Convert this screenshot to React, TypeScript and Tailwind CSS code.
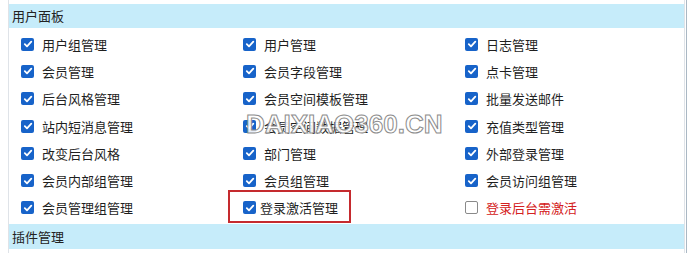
import React from "react";

type Item = { label: string; checked?: boolean; red?: boolean; tight?: boolean };

const rows: Item[][] = [
  [{ label: "用户组管理", checked: true }, { label: "用户管理", checked: true }, { label: "日志管理", checked: true }],
  [{ label: "会员管理", checked: true }, { label: "会员字段管理", checked: true }, { label: "点卡管理", checked: true }],
  [{ label: "后台风格管理", checked: true }, { label: "会员空间模板管理", checked: true }, { label: "批量发送邮件", checked: true }],
  [{ label: "站内短消息管理", checked: true }, { label: "会员空间数据管理", checked: true }, { label: "充值类型管理", checked: true }],
  [{ label: "改变后台风格", checked: true }, { label: "部门管理", checked: true }, { label: "外部登录管理", checked: true }],
  [{ label: "会员内部组管理", checked: true }, { label: "会员组管理", checked: true }, { label: "会员访问组管理", checked: true }],
  [{ label: "会员管理组管理", checked: true }, { label: "登录激活管理", checked: true, tight: true }, { label: "登录后台需激活", checked: false, red: true }],
];

function Box({ checked }: { checked?: boolean }) {
  if (checked) {
    return (
      <span className="flex h-[13px] w-[13px] shrink-0 items-center justify-center rounded-[2px] bg-[#1763c9]">
        <svg width="10" height="10" viewBox="0 0 10 10">
          <path d="M1.8 5.2 L4 7.3 L8.3 2.6" fill="none" stroke="#fff" strokeWidth="1.8" strokeLinecap="round" strokeLinejoin="round" />
        </svg>
      </span>
    );
  }
  return <span className="h-[13px] w-[13px] shrink-0 rounded-[2px] border-[1.5px] border-[#8a8a8a] bg-white" />;
}

export default function App() {
  return (
    <div
      className="relative h-[253px] w-[690px] overflow-hidden bg-white"
      style={{ fontFamily: '"Noto Sans CJK SC", "Noto Sans", sans-serif' }}
    >
      <div className="ml-[8px] flex h-[253px] w-[677px] flex-col border-l border-r border-[#dfe3e8] pt-[4px]">
        <div className="flex h-[24px] items-center bg-[#c6ecfa] pl-[3px] text-[13px] text-[#222]">用户面板</div>
        <div className="grid grid-cols-[222px_222px_222px] pl-[12px] pt-[2.5px] pb-[2.5px]">
          {rows.map((row, ri) =>
            row.map((it, ci) => (
              <div key={`${ri}-${ci}`} className="flex h-[27.3px] items-center">
                <Box checked={it.checked} />
                <span
                  className={`${it.tight ? "ml-[4px]" : "ml-[8px]"} whitespace-nowrap text-[13px] leading-none ${
                    it.red ? "text-[#d42020]" : "text-[#1f1f1f]"
                  }`}
                >
                  {it.label}
                </span>
              </div>
            ))
          )}
        </div>
        <div className="flex h-[25px] items-center bg-[#c6ecfa] pl-[3px] text-[13px] text-[#222]">插件管理</div>
      </div>
      <div className="absolute left-[686px] top-0 h-[253px] w-px bg-[#aab8c4]" />
      <div className="absolute left-[228px] top-[190px] h-[33px] w-[123px] border-2 border-[#c52a2e]" />
      <div
        className="absolute left-[246px] top-[108px] text-[26px] font-bold leading-[32px] text-white/90 [-webkit-text-stroke:1px_#8c8c8c]"
        style={{ fontFamily: '"Liberation Sans", Arial, sans-serif' }}
      >
        DAIXIAO360.CN
      </div>
    </div>
  );
}
